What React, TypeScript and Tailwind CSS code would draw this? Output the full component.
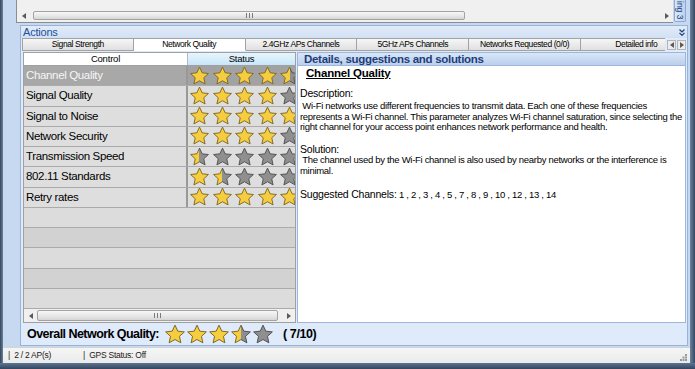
import React, { useId } from 'react';

type StarFill = 'full' | 'half' | 'empty';

const STAR_PATH =
  'M12 1.3l3.2 6.9 7.5.8-5.6 5.1 1.6 7.4L12 17.7l-6.7 3.8 1.6-7.4-5.6-5.1 7.5-.8z';

const Star: React.FC<{ fill: StarFill; className?: string }> = ({ fill, className }) => {
  const raw = useId();
  const id = raw.replace(/[^a-zA-Z0-9]/g, '');
  const yellow = '#f6cd3e';
  const gray = '#8f8f8f';
  const yellowEdge = '#7a6522';
  const grayEdge = '#4e4e4e';

  if (fill === 'half') {
    return (
      <svg viewBox="0 0 24 24" className={className}>
        <defs>
          <linearGradient id={`hf${id}`} x1="0" x2="1" y1="0" y2="0">
            <stop offset="0.5" stopColor={yellow} />
            <stop offset="0.5" stopColor={gray} />
          </linearGradient>
          <linearGradient id={`hs${id}`} x1="0" x2="1" y1="0" y2="0">
            <stop offset="0.5" stopColor={yellowEdge} />
            <stop offset="0.5" stopColor={grayEdge} />
          </linearGradient>
        </defs>
        <path d={STAR_PATH} fill={`url(#hf${id})`} stroke={`url(#hs${id})`} strokeWidth="1.1" strokeLinejoin="round" />
      </svg>
    );
  }

  return (
    <svg viewBox="0 0 24 24" className={className}>
      <path
        d={STAR_PATH}
        fill={fill === 'full' ? yellow : gray}
        stroke={fill === 'full' ? yellowEdge : grayEdge}
        strokeWidth="1.1"
        strokeLinejoin="round"
      />
    </svg>
  );
};

const starFills = (rating: number): StarFill[] =>
  [0, 1, 2, 3, 4].map((i) => (rating >= i + 1 ? 'full' : rating >= i + 0.5 ? 'half' : 'empty'));

const qualityRows = [
  { name: 'Channel Quality', rating: 4.5 },
  { name: 'Signal Quality', rating: 4 },
  { name: 'Signal to Noise', rating: 5 },
  { name: 'Network Security', rating: 4 },
  { name: 'Transmission Speed', rating: 0.5 },
  { name: '802.11 Standards', rating: 1.5 },
  { name: 'Retry rates', rating: 5 },
];

const tabs = [
  'Signal Strength',
  'Network Quality',
  '2.4GHz APs Channels',
  '5GHz APs Channels',
  'Networks Requested (0/0)',
  'Detailed info',
];

const Arrow: React.FC<{ dir: 'left' | 'right' }> = ({ dir }) => (
  <svg viewBox="0 0 4 6" className="w-[4px] h-[6px]">
    <path d={dir === 'left' ? 'M4 0L0 3l4 3z' : 'M0 0l4 3-4 3z'} fill="#5a5a5a" />
  </svg>
);

// horizontal scrollbar, thumb position given as classes
const HScrollbar: React.FC<{ thumbClass: string; className?: string }> = ({ thumbClass, className }) => (
  <div className={`flex items-stretch bg-[#f0f0f0] ${className ?? ''}`}>
    <div className="w-[13px] flex items-center justify-center">
      <Arrow dir="left" />
    </div>
    <div className="flex-1 flex items-stretch py-[1px]">
      <div
        className={`${thumbClass} rounded-[2px] border border-[#a3a3a3] bg-gradient-to-b from-[#f7f7f7] via-[#e9e9e9] to-[#d6d6d6] flex items-center justify-center`}
      >
        <svg viewBox="0 0 7 5" className="w-[7px] h-[5px]">
          <path d="M0.5 0v5M3.5 0v5M6.5 0v5" stroke="#7a7a7a" strokeWidth="1" />
        </svg>
      </div>
    </div>
    <div className="w-[13px] flex items-center justify-center">
      <Arrow dir="right" />
    </div>
  </div>
);

export default function App() {
  const emptyRows = [0, 1, 2, 3, 4];

  return (
    <div className="w-[695px] h-[369px] overflow-hidden bg-[#41566f] flex flex-col font-['Liberation_Sans',Arial,sans-serif] text-black">
      <div className="flex-1 flex min-h-0">
        <div className="w-[3px] bg-gradient-to-r from-[#34465c] to-[#6d82a0]" />

        <div className="flex-1 min-w-0 flex flex-col bg-[#c6d9f0]">
          <div className="flex-1 flex flex-col pl-[13px]">
            {/* top docked panel */}
            <div className="flex h-[23px]">
              <div className="w-[657px] flex flex-col border-l border-b border-[#8d8d8d] bg-[#f0f0f0]">
                <div className="flex-1" />
                <HScrollbar thumbClass="ml-[3px] w-[432px]" className="h-[11px] mb-px" />
              </div>
              <div className="ml-px w-[12px] h-[22px] flex items-center justify-center border border-t-0 border-[#8ea9cf] bg-gradient-to-r from-[#dbe8f8] to-[#bcd2ee] rounded-b-[2px]">
                <span className="[writing-mode:vertical-rl] text-[8.5px] leading-[10px] text-[#1f3f7f]">ing 3</span>
              </div>
            </div>

            {/* Actions panel */}
            <div className="mt-[2px] ml-[4px] w-[668px] h-[321px] border border-[#98b3d8] bg-[#dfeafa] flex flex-col">
              <div className="h-[12px] flex items-center justify-between pl-[2px] pr-[2px] bg-gradient-to-b from-[#e2ecf9] to-[#d0e0f4]">
                <span className="text-[11px] tracking-[-0.2px] leading-[12px] text-[#1f4f9a]">Actions</span>
                <svg viewBox="0 0 6 7" className="w-[6px] h-[7px]">
                  <path d="M0.5 0.5L3 3l2.5-2.5M0.5 3.8L3 6.3l2.5-2.5" fill="none" stroke="#1f3f7f" strokeWidth="1.2" />
                </svg>
              </div>

              {/* tabs */}
              <div className="h-[13px] flex pl-[1px] pr-px">
                <div className="flex-1 min-w-0 flex overflow-hidden">
                  {tabs.map((tab, i) => (
                    <div
                      key={tab}
                      className={`shrink-0 w-[111.8px] flex items-center justify-center border-y border-r border-[#a3a3a3] text-[8.5px] tracking-[-0.4px] leading-[11px] whitespace-nowrap ${
                        i === 0 ? 'border-l' : ''
                      } ${
                        i === 1
                          ? 'bg-white border-b-white'
                          : 'bg-gradient-to-b from-[#f6f6f6] to-[#e0e0e0]'
                      }`}
                    >
                      {tab}
                    </div>
                  ))}
                </div>
                <div className="ml-[2px] flex items-center gap-px">
                  <div className="w-[9px] h-[10px] border border-[#b5b5b5] bg-[#ececec] flex items-center justify-center">
                    <Arrow dir="left" />
                  </div>
                  <div className="w-[9px] h-[10px] border border-[#b5b5b5] bg-[#ececec] flex items-center justify-center">
                    <Arrow dir="right" />
                  </div>
                </div>
              </div>

              {/* content */}
              <div className="mt-px h-[271px] flex pl-[2px] pr-px">
                {/* quality grid */}
                <div className="w-[273px] h-full border border-[#a0a0a0] bg-[#dcdcdc] flex flex-col">
                  <div className="h-[13px] flex text-[9.5px] tracking-[-0.2px] leading-[12px] border-b border-[#a0a0a0]">
                    <div className="w-[164px] bg-white text-center border-r border-[#b8b8b8]">Control</div>
                    <div className="flex-1 bg-gradient-to-b from-[#e6f5fd] to-[#c8e6f9] text-center">Status</div>
                  </div>
                  <div className="flex-1 flex flex-col">
                    {qualityRows.map((row, i) => {
                      const selected = i === 0;
                      return (
                        <div key={row.name} className="flex-1 flex border-b border-[#ababab] overflow-hidden">
                          <div
                            className={`w-[164px] flex items-center pl-[2px] border-r-2 border-[#999999] text-[11.5px] tracking-[-0.35px] ${
                              selected ? 'bg-[#a8a8a8] text-[#f6f6f6]' : 'bg-[#dedede]'
                            }`}
                          >
                            {row.name}
                          </div>
                          <div
                            className={`flex-1 min-w-0 flex items-center gap-[1.5px] pl-px overflow-hidden ${
                              selected ? 'bg-[#a2a2a2]' : 'bg-[#dedede]'
                            }`}
                          >
                            {starFills(row.rating).map((f, k) => (
                              <Star key={k} fill={f} className="shrink-0 w-[21px] h-[20px]" />
                            ))}
                          </div>
                        </div>
                      );
                    })}
                    {emptyRows.map((k) => (
                      <div
                        key={k}
                        className={`flex-1 border-b border-[#ababab] ${k % 2 === 0 ? 'bg-[#dcdcdc]' : 'bg-[#d2d2d2]'}`}
                      />
                    ))}
                  </div>
                  <HScrollbar thumbClass="w-[241px]" className="h-[13px]" />
                </div>

                {/* details panel */}
                <div className="ml-px flex-1 min-w-0 h-full border border-[#9db6da] bg-white flex flex-col overflow-hidden">
                  <div className="h-[13px] shrink-0 bg-gradient-to-b from-[#d8e6f7] to-[#bad0ed] border-b border-[#9db6da] pl-[6px] text-[11.5px] leading-[12px] font-bold tracking-[-0.3px] text-[#1f3d7a]">
                    Details, suggestions and solutions
                  </div>
                  <div className="pl-[2px] whitespace-pre">
                    <div className="mt-px ml-[6px] text-[11.5px] leading-[13px] font-bold tracking-[-0.2px] underline">
                      Channel Quality
                    </div>
                    <div className="mt-[7px] text-[10.5px] tracking-[-0.2px] leading-[12px]">Description:</div>
                    <div className="mt-[2px] text-[9.5px] leading-[10.5px] tracking-[-0.3px]">
                      {' Wi-Fi networks use different frequencies to transmit data. Each one of these frequencies'}
                      <br />
                      {'represents a Wi-Fi channel. This parameter analyzes Wi-Fi channel saturation, since selecting the'}
                      <br />
                      {'right channel for your access point enhances network performance and health.'}
                    </div>
                    <div className="mt-[10.5px] text-[10.5px] tracking-[-0.2px] leading-[12px]">Solution:</div>
                    <div className="text-[9.5px] leading-[10.5px] tracking-[-0.3px]">
                      {' The channel used by the Wi-Fi channel is also used by nearby networks or the interference is'}
                      <br />
                      {'minimal.'}
                    </div>
                    <div className="mt-[12px] text-[10.5px] tracking-[-0.2px] leading-[12px]">
                      Suggested Channels:
                      <span className="text-[9.5px] tracking-[-0.3px]">
                        {' 1 , 2 , 3 , 4 , 5 , 7 , 8 , 9 , 10 , 12 , 13 , 14'}
                      </span>
                    </div>
                  </div>
                </div>
              </div>

              {/* overall quality footer */}
              <div className="flex-1 flex items-center pl-[6px]">
                <span className="text-[12.5px] font-bold tracking-[-0.55px]">Overall Network Quality:</span>
                <div className="ml-[5px] flex">
                  {starFills(3.5).map((f, k) => (
                    <Star key={k} fill={f} className="w-[22px] h-[21px]" />
                  ))}
                </div>
                <span className="ml-[9px] text-[12.5px] font-bold tracking-[-0.4px] whitespace-pre">( 7/10)</span>
              </div>
            </div>
          </div>

          {/* status bar */}
          <div className="mt-px h-[16px] flex items-center pl-[5px] pr-[3px] border-t border-[#d4d4d4] bg-gradient-to-b from-[#f5f5f5] to-[#ebebeb] text-[8.5px] tracking-[-0.25px] text-[#222]">
            <span className="w-[75px] whitespace-pre">{'|  2 / 2 AP(s)'}</span>
            <span className="whitespace-pre">{'|  GPS Status: Off'}</span>
            <svg viewBox="0 0 7 7" className="ml-auto w-[7px] h-[7px] self-end mb-[2px]">
              <g fill="#9a9a9a">
                <rect x="5" y="0" width="2" height="2" />
                <rect x="2.5" y="2.5" width="2" height="2" />
                <rect x="5" y="2.5" width="2" height="2" />
                <rect x="0" y="5" width="2" height="2" />
                <rect x="2.5" y="5" width="2" height="2" />
                <rect x="5" y="5" width="2" height="2" />
              </g>
            </svg>
          </div>
        </div>

        <div className="w-[5px] bg-gradient-to-r from-[#6a83a6] to-[#37495f]" />
      </div>
      <div className="h-[6px] bg-gradient-to-b from-[#5d7597] to-[#33455b]" />
    </div>
  );
}
